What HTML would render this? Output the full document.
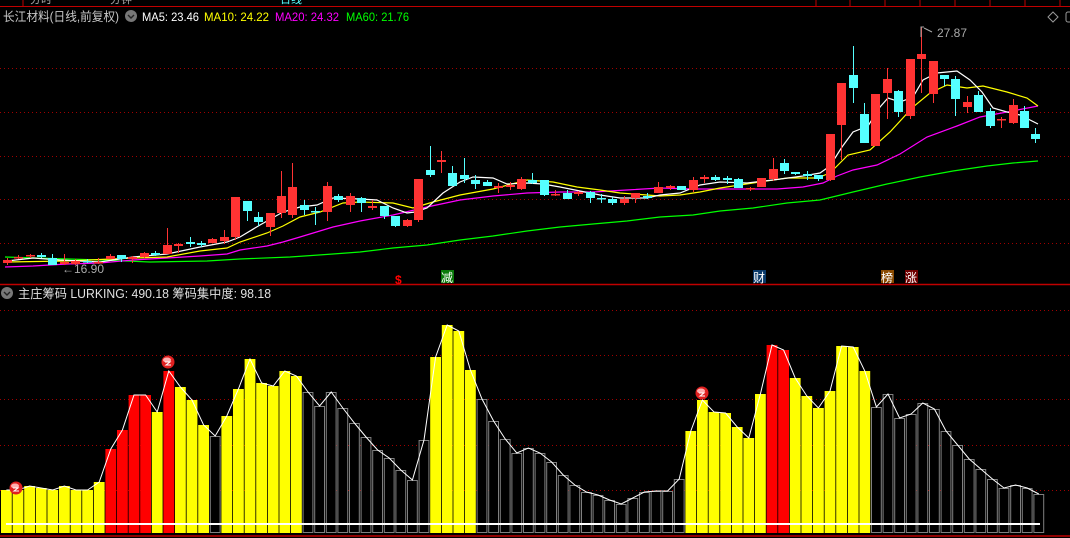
<!DOCTYPE html>
<html><head><meta charset="utf-8">
<style>
html,body{margin:0;padding:0;background:#000;width:1070px;height:538px;overflow:hidden}
svg{display:block}
text{font-family:"Liberation Sans","Noto Sans CJK SC",sans-serif}
</style></head>
<body>
<svg id="s" width="1070" height="538" viewBox="0 0 1070 538" xmlns="http://www.w3.org/2000/svg">
<rect width="1070" height="538" fill="#000"/>
<line x1="0" y1="6.5" x2="1070" y2="6.5" stroke="#c00000" stroke-width="1"/>
<line x1="23" y1="0" x2="23" y2="6" stroke="#c00000"/>
<g fill="#aaa" font-size="11">
<text x="30" y="3">分时</text><text x="110" y="3">分钟</text><text x="280" y="3" fill="#5ff">日线</text>
</g>
<g stroke="#c00000"><line x1="816" y1="0" x2="816" y2="6"/><line x1="850" y1="0" x2="850" y2="6"/><line x1="885" y1="0" x2="885" y2="6"/><line x1="920" y1="0" x2="920" y2="6"/><line x1="955" y1="0" x2="955" y2="6"/><line x1="990" y1="0" x2="990" y2="6"/><line x1="1025" y1="0" x2="1025" y2="6"/><line x1="1060" y1="0" x2="1060" y2="6"/></g>
<text x="3" y="21" font-size="12.5" fill="#c8c8c8" textLength="116" lengthAdjust="spacingAndGlyphs">长江材料(日线,前复权)</text>
<circle cx="131" cy="16" r="6" fill="#777"/><path d="M128 15 l3 3 l3 -3" stroke="#222" stroke-width="1.4" fill="none"/>
<text x="142" y="21" font-size="12" fill="#fff" textLength="57" lengthAdjust="spacingAndGlyphs">MA5: 23.46</text>
<text x="204" y="21" font-size="12" fill="#ff0" textLength="65" lengthAdjust="spacingAndGlyphs">MA10: 24.22</text>
<text x="275" y="21" font-size="12" fill="#f0f" textLength="64" lengthAdjust="spacingAndGlyphs">MA20: 24.32</text>
<text x="346" y="21" font-size="12" fill="#0f0" textLength="63" lengthAdjust="spacingAndGlyphs">MA60: 21.76</text>
<path d="M1053 12 l5 5 l-5 5 l-5 -5z" stroke="#999" fill="none"/>
<rect x="1066" y="12" width="6" height="10" rx="2" stroke="#999" fill="none"/>
<g id="grid"></g>
<g id="lines"></g>
<g id="candles"></g>
<text x="62" y="273" font-size="12" fill="#aaa">←16.90</text>
<path d="M921 37 V27 h3 M924 28 l8 4" stroke="#aaa" fill="none"/>
<text x="937" y="37" font-size="12" fill="#aaa">27.87</text>
<text x="395" y="284" font-size="12" fill="#f00" font-weight="bold">$</text>
<rect x="441" y="270" width="13" height="13" fill="#0a7a0a"/><text x="441" y="282" font-size="12" fill="#fff">减</text>
<rect x="753" y="270" width="13" height="13" fill="#0a3a6a"/><text x="753" y="282" font-size="12" fill="#fff">财</text>
<rect x="881" y="270" width="13" height="13" fill="#8a4a00"/><text x="881" y="282" font-size="12" fill="#fff">榜</text>
<rect x="905" y="270" width="13" height="13" fill="#700000"/><text x="905" y="282" font-size="12" fill="#fff">涨</text>
<line x1="0" y1="284.5" x2="1070" y2="284.5" stroke="#c00000" stroke-width="1.5"/>
<circle cx="7" cy="293" r="6" fill="#777"/><path d="M4 292 l3 3 l3 -3" stroke="#222" stroke-width="1.4" fill="none"/>
<text x="18" y="298" font-size="12.5" fill="#e0e0e0" textLength="253" lengthAdjust="spacingAndGlyphs">主庄筹码 LURKING: 490.18 筹码集中度: 98.18</text>
<g id="bars"></g>
<line x1="0" y1="536" x2="1070" y2="536" stroke="#c00000" stroke-width="1.5"/>
</svg>
<script>
var NS="http://www.w3.org/2000/svg";
function el(p,t,a){var e=document.createElementNS(NS,t);for(var k in a)e.setAttribute(k,a[k]);p.appendChild(e);return e;}
var g=document.getElementById('grid');
[68,112,156,199,243,310,355,399,445,490].forEach(function(y){el(g,'line',{x1:0,x2:1070,y1:y+.5,y2:y+.5,stroke:'#a00000','stroke-dasharray':'1 3'});});
var C=[['r',260,263,258,265],['r',257,258,255,259],['r',255,256,254,258],['c',255,257,253,258],['c',258,265,254,265],['r',262,264,254,265],['r',261,264,259,265],['c',261,262,259,263],['r',262,263,258,264],['r',256,259,254,259],['c',255,259,255,262],['r',257,259,256,263],['r',253,257,252,258],['c',253,255,251,256],['r',245,254,228,254],['r',244,246,243,253],['c',242,244,237,247],['c',243,245,241,247],['r',239,243,238,243],['r',237,241,230,244],['r',197,237,197,240],['c',201,211,201,221],['c',217,222,212,226],['r',213,227,213,236],['r',196,213,171,218],['r',187,215,163,218],['c',205,210,200,215],['c',211,212,207,225],['r',186,212,182,221],['c',196,200,194,202],['r',196,205,193,212],
['c',198,203,197,212],['r',206,208,200,210],['c',206,216,206,219],['c',216,226,216,227],['r',220,226,219,227],['r',179,220,179,222],['c',170,175,146,177],['r',160,162,151,173],['c',173,186,166,186],['c',175,179,158,183],['c',180,184,175,189],['c',182,186,180,186],['r',186,188,183,193],['r',185,187,182,190],['r',179,189,177,190],['c',180,183,173,184],['c',180,195,180,196],['r',194,195,190,196],['c',193,199,190,199],['r',192,194,191,196],['c',192,198,191,203],['c',198,199,194,203],['c',199,203,197,205],['r',199,203,196,205],['r',193,198,193,203],['c',196,198,193,199],['r',187,193,182,193],['r',186,188,185,190],['c',186,190,186,190],['r',180,190,177,192],['r',177,179,175,183],['c',177,180,175,181],
['c',178,180,176,184],['c',179,188,178,188],['r',188,189,187,191],['r',178,187,178,187],['r',169,179,158,181],['c',163,171,159,174],['c',172,174,172,175],['c',174,176,171,180],['c',175,179,175,181],['r',134,180,134,181],['r',83,125,83,160],['c',75,88,46,103],['c',114,143,103,143],['r',94,146,94,146],['r',79,93,68,119],['c',91,112,90,117],['r',59,116,59,119],['r',54,59,27,93],['r',61,94,61,103],['c',75,79,75,86],['c',79,99,76,116],['r',102,107,96,113],['c',95,112,91,112],['c',111,126,108,128],['r',119,120,117,128],['r',105,123,99,124],['c',111,128,106,128],['c',134,139,128,143]];
var cg=document.getElementById('candles');
C.forEach(function(c,i){var x=Math.round(6.7+11.43*i)+.5;var col=c[0]=='r'?'#ff3333':'#55ffff';
el(cg,'line',{x1:x,x2:x,y1:c[3],y2:c[4],stroke:col});
var h=Math.max(1.5,c[2]-c[1]);el(cg,'rect',{x:x-4.5,y:c[1],width:9,height:h,fill:col});});
var L={
w:[[7,261],[33,258],[60,260],[100,262],[133,257],[167,254],[200,247],[227,242],[240,237],[260,225],[283,212],[300,207],[317,205],[333,198],[360,199],[377,200],[393,208],[407,213],[415,212],[427,208],[443,193],[460,182],[473,177],[493,178],[507,184],[527,183],[543,184],[560,187],[580,191],[600,195],[620,198],[647,198],[660,195],[680,193],[700,185],[720,182],[747,183],[773,180],[803,176],[820,173],[830,166],[842,147],[853,132],[868,126],[880,107],[888,98],[900,102],[913,97],[923,80],[937,73],[957,71],[970,80],[982,92],[993,108],[1007,112],[1020,115],[1038,124]],
y:[[7,262],[67,261],[133,258],[167,257],[200,251],[227,248],[240,242],[267,233],[283,226],[300,217],[320,212],[343,203],[360,202],[393,203],[413,208],[433,202],[460,195],[493,189],[527,180],[553,182],[577,187],[600,190],[620,193],[647,195],[660,196],[680,195],[700,192],[720,188],[753,183],[787,178],[817,178],[830,173],[848,155],[870,150],[890,132],[913,107],[930,93],[947,85],[967,88],[983,86],[1007,92],[1027,98],[1038,106]],
m:[[5,267],[33,266],[67,264],[100,263],[133,260],[167,258],[200,256],[227,254],[240,250],[267,246],[283,242],[300,237],[333,227],[360,221],[393,215],[427,207],[460,200],[493,196],[527,193],[560,192],[593,192],[627,190],[660,188],[693,189],[720,189],[777,189],[803,187],[823,183],[837,176],[853,170],[877,165],[900,154],[927,137],[957,126],[980,117],[1007,112],[1038,106]],
g:[[5,257],[100,260],[150,262],[207,261],[240,259],[290,257],[333,254],[360,252],[393,248],[427,245],[460,240],[493,236],[527,231],[560,227],[593,224],[627,221],[660,217],[693,215],[720,211],[753,208],[787,203],[820,200],[853,192],[887,184],[920,177],[953,171],[987,166],[1013,163],[1038,161]]};
var lg=document.getElementById('lines');
[['g','#00ff00'],['m','#ff00ff'],['y','#ffff00'],['w','#ffffff']].forEach(function(p){el(lg,'polyline',{points:L[p[0]].map(function(q){return q.join(',')}).join(' '),fill:'none',stroke:p[1],'stroke-width':1.2});});
var T=[488,488,484,486,488,484,488,488,480,447,428,394,394,411,370,386,399,423,434,415,388,358,382,385,370,375,391,405,391,407,421,435,448,456,468,478,438,356,325,331,369,398,419,437,451,446,448,457,470,479,486,489,494,498,492,486,485,485,474,427,397,409,410,423,434,391,344,349,376,393,405,388,345,346,369,404,391,415,411,400,406,427,441,454,464,474,482,479,482,488];
var red=[9,10,11,12,14,66,67],yel=[0,1,2,3,4,5,6,7,8,13,15,16,17,19,20,21,22,23,24,25,37,38,39,40,59,60,61,62,63,64,65,68,69,70,71,72,73,74];
var bg=document.getElementById('bars');var pts=[];var B=533;
T.forEach(function(t0,i){var f=i<46?1.014:1.033;var t=Math.round(310+(t0-310)*f);var x=1+11.6*i;var w=10.8;
if(red.indexOf(i)>=0)el(bg,'rect',{x:x,y:t,width:w,height:B-t,fill:'#ff0000'});
else if(yel.indexOf(i)>=0)el(bg,'rect',{x:x,y:t,width:w,height:B-t,fill:'#ffff00'});
else el(bg,'rect',{x:x+.5,y:t+.5,width:w-1,height:B-1-t,fill:'#000',stroke:'#808080'});
pts.push((x+w/2).toFixed(1)+','+t);});
el(bg,'polyline',{points:pts.join(' '),fill:'none',stroke:'#fff','stroke-width':1});
el(bg,'line',{x1:6,x2:1040,y1:524,y2:524,stroke:'#fff','stroke-width':2});
[[16,488],[168,362],[702,393]].forEach(function(b){el(bg,'circle',{cx:b[0],cy:b[1],r:6.5,fill:'#e02020'});el(bg,'ellipse',{cx:b[0]-1,cy:b[1]-2,rx:4,ry:2.5,fill:'#ffb0b0'});el(bg,'path',{d:'M'+(b[0]-3)+' '+b[1]+' h5 l-4 3 h5',stroke:'#fff',fill:'none','stroke-width':1});});
</script>
</body></html>
